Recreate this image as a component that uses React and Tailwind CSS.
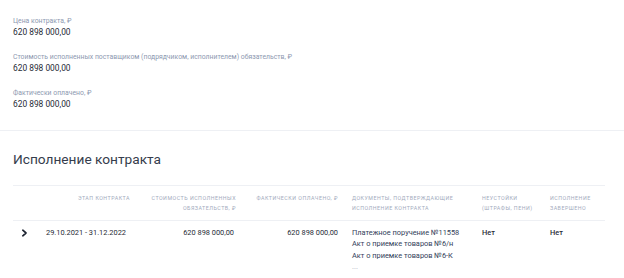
import React from "react";

const summary = [
  { label: "Цена контракта, ₽", value: "620 898 000,00" },
  {
    label: "Стоимость исполненных поставщиком (подрядчиком, исполнителем) обязательств, ₽",
    value: "620 898 000,00",
  },
  { label: "Фактически оплачено, ₽", value: "620 898 000,00" },
];

const docs = [
  "Платежное поручение №11558",
  "Акт о приемке товаров №6/н",
  "Акт о приемке товаров №6-К",
];

function Chevron() {
  return (
    <svg width="7" height="8" viewBox="0 0 7 8" fill="none">
      <path d="M1.8 1.2 L5 4 L1.8 6.8" stroke="#1f2533" strokeWidth="1.7" strokeLinecap="round" strokeLinejoin="round" />
    </svg>
  );
}

export default function App() {
  return (
    <div className="w-[624px] h-[278px] overflow-hidden bg-white font-['Roboto',sans-serif]">
      <section className="px-[13px] pt-[16px] pb-[19px] flex flex-col gap-[13px]">
        {summary.map((item) => (
          <div key={item.label}>
            <div className="text-[6.85px] leading-[10px] text-[#8d98b0] whitespace-nowrap">{item.label}</div>
            <div className="text-[8.4px] leading-[13px] text-[#262b36]">{item.value}</div>
          </div>
        ))}
      </section>

      <div className="h-px bg-[#eef0f4]" />

      <section className="px-[13px] pt-[18px]">
        <h2 className="text-[13.7px] leading-[20px] text-[#353c4c] font-normal">Исполнение контракта</h2>

        <div className="mt-[16px] w-[592px] border-t border-[#eef0f4]">
          <div className="grid grid-cols-[27px_100px_100px_102px_130px_68px_65px] border-b border-[#eef0f4] py-[7px] text-[5.3px] leading-[10px] tracking-[0.5px] uppercase text-[#a3abbd] whitespace-nowrap">
            <div />
            <div className="text-right pr-[10px]">Этап контракта</div>
            <div className="text-right pr-[4px]">Стоимость исполненных<br />обязательств, ₽</div>
            <div className="text-right pr-[4px]">Фактически оплачено, ₽</div>
            <div className="pl-[10px]">Документы, подтверждающие<br />исполнение контракта</div>
            <div className="pl-[10px]">Неустойки<br />(штрафы, пени)</div>
            <div className="pl-[10px]">Исполнение<br />завершено</div>
          </div>

          <div className="grid grid-cols-[27px_100px_100px_102px_130px_68px_65px] pt-[6px] text-[7.4px] leading-[11.4px] text-[#262b36] whitespace-nowrap">
            <div className="pl-[8px] pt-[2px]">
              <Chevron />
            </div>
            <div className="pl-[6px]">29.10.2021 - 31.12.2022</div>
            <div className="text-right pr-[6px]">620 898 000,00</div>
            <div className="text-right pr-[4px]">620 898 000,00</div>
            <div className="pl-[10px] text-[#334059]">
              {docs.map((d) => (
                <div key={d}>{d}</div>
              ))}
              <div className="text-[#a3abbd]">...</div>
            </div>
            <div className="pl-[10px] font-medium">Нет</div>
            <div className="pl-[10px] font-medium">Нет</div>
          </div>
        </div>
      </section>
    </div>
  );
}
